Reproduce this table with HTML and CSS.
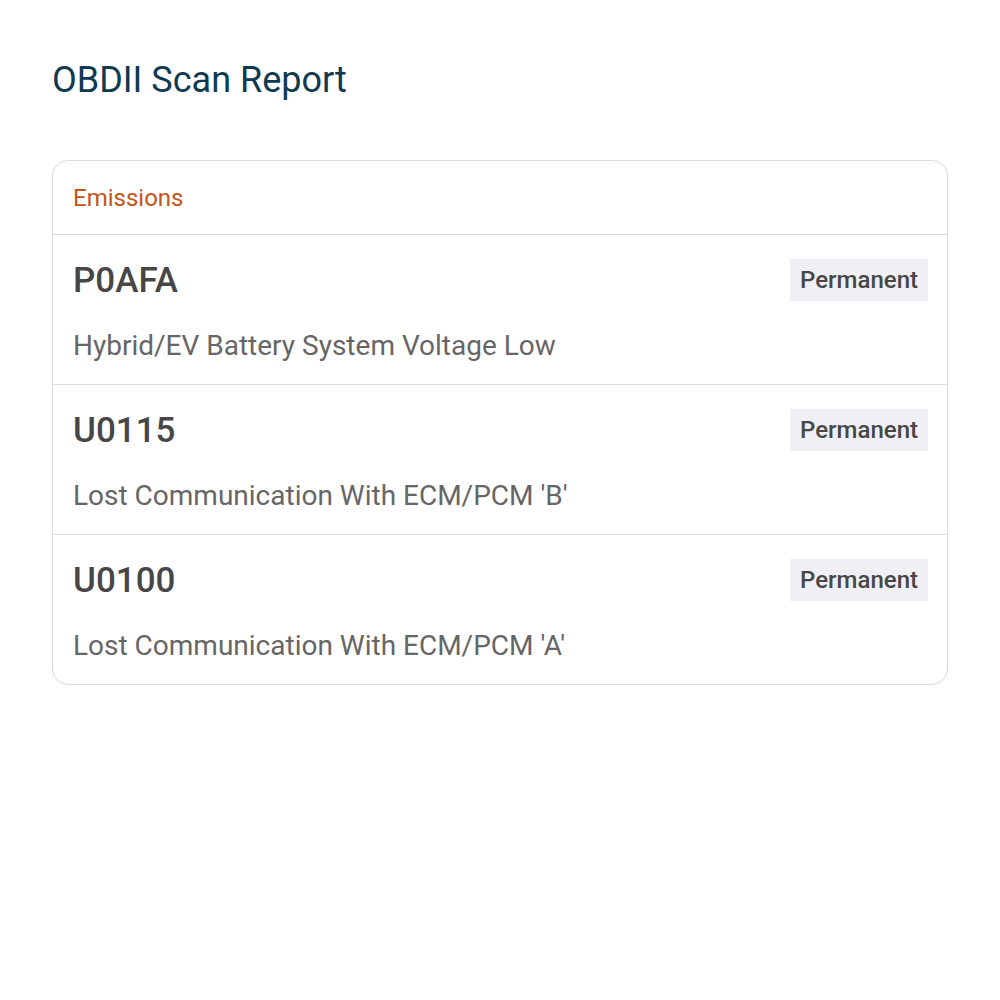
FILE: index.html
```html
<!DOCTYPE html>
<html lang="en">
<head>
    <meta charset="UTF-8">
    <title>OBDII Scan Report</title>
    <link rel="stylesheet" href="styles.css">
</head>
<body>

<div class="page">
    <h1 class="title">OBDII Scan Report</h1>

    <div class="card">
        <div class="card-header">Emissions</div>

        <div class="code-row">
            <div class="code-top">
                <span class="code">P0AFA</span>
                <span class="badge">Permanent</span>
            </div>
            <p class="desc">Hybrid/EV Battery System Voltage Low</p>
        </div>

        <div class="code-row">
            <div class="code-top">
                <span class="code">U0115</span>
                <span class="badge">Permanent</span>
            </div>
            <p class="desc">Lost Communication With ECM/PCM 'B'</p>
        </div>

        <div class="code-row">
            <div class="code-top">
                <span class="code">U0100</span>
                <span class="badge">Permanent</span>
            </div>
            <p class="desc">Lost Communication With ECM/PCM 'A'</p>
        </div>
    </div>
</div>

</body>
</html>
```

FILE: styles.css
```css
body {
    margin: 0;
    font-family: Roboto, 'Liberation Sans', sans-serif;
    background: #fff;
}
.page {
    padding: 56px 52px;
}
.title {
    margin: 0 0 56px 0;
    font-size: 36px;
    font-weight: 400;
    line-height: 48px;
    color: #0f3a52;
}
.card {
    border: 1px solid #dcdcdc;
    border-radius: 16px;
    overflow: hidden;
}
.card-header {
    height: 73px;
    display: flex;
    align-items: center;
    padding: 0 20px;
    font-size: 24px;
    color: #c4541c;
    border-bottom: 1px solid #dcdcdc;
}
.code-row {
    padding: 24px 19px 23px 20px;
    border-bottom: 1px solid #dcdcdc;
}
.code-row:last-child {
    border-bottom: none;
}
.code-top {
    display: flex;
    justify-content: space-between;
    align-items: center;
    height: 42px;
}
.code {
    font-size: 35px;
    font-weight: 500;
    color: #474747;
}
.badge {
    background: #f0f0f4;
    padding: 0 10px;
    height: 42px;
    line-height: 42px;
    font-size: 24px;
    font-weight: 500;
    color: #474747;
}
.desc {
    margin: 30px 0 0 0;
    font-size: 28px;
    line-height: 30px;
    color: #666;
}
```
